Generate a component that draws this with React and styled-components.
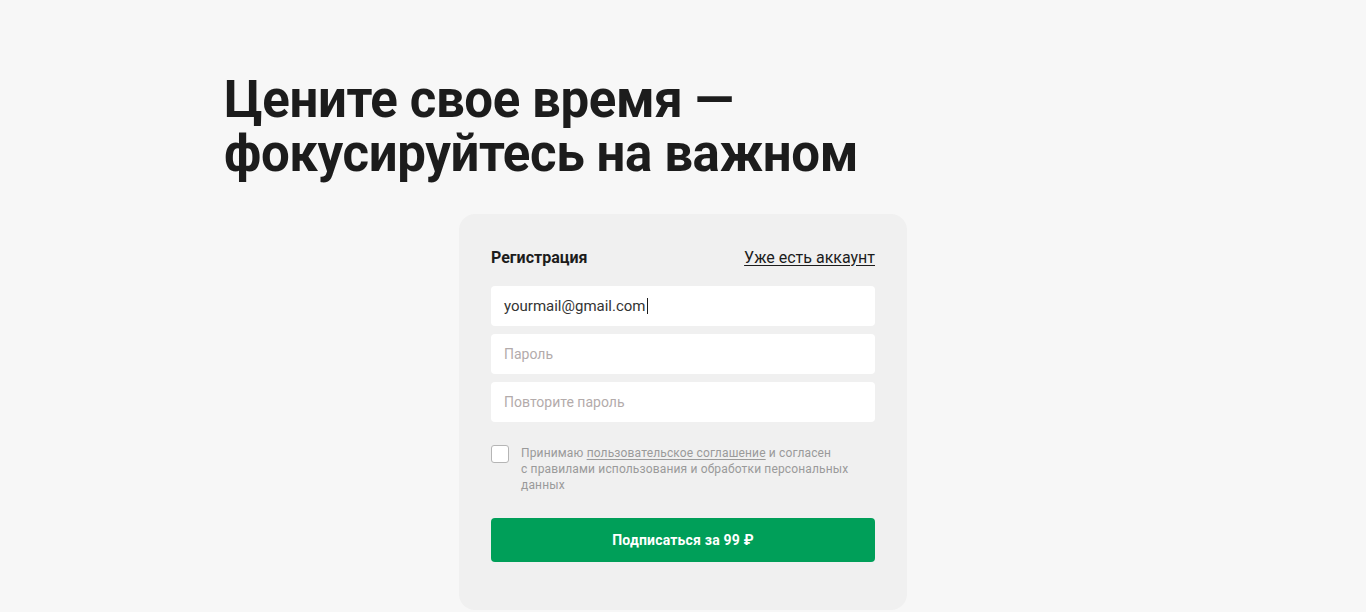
import React from "react";
import styled, { createGlobalStyle } from "styled-components";

const GlobalStyle = createGlobalStyle`
  html, body {
    margin: 0;
    padding: 0;
    background: #f7f7f7;
    font-family: Roboto, "Liberation Sans", sans-serif;
    color: #1c1c1c;
  }
  * {
    box-sizing: border-box;
  }
`;

const Page = styled.main`
  min-height: 612px;
  padding: 73px 0 0;
  display: flex;
  flex-direction: column;
  align-items: center;
`;

const Heading = styled.h1`
  width: 918px;
  margin: 0 0 33px;
  font-size: 51px;
  font-weight: 700;
  line-height: 54px;
  letter-spacing: -0.4px;
  color: #1c1c1c;
`;

const Card = styled.form`
  width: 448px;
  padding: 32px 32px 48px;
  background: #f0f0f0;
  border-radius: 16px;
  display: flex;
  flex-direction: column;
`;

const CardHeader = styled.div`
  display: flex;
  justify-content: space-between;
  align-items: center;
  height: 22px;
  margin-bottom: 18px;
`;

const CardTitle = styled.span`
  font-size: 16px;
  font-weight: 700;
  color: #1c1c1c;
`;

const LoginLink = styled.a`
  font-size: 16px;
  color: #1c1c1c;
  text-decoration: underline;
  text-underline-offset: 2px;
  cursor: pointer;
`;

const Fields = styled.div`
  display: flex;
  flex-direction: column;
  gap: 8px;
`;

const Field = styled.input`
  height: 40px;
  padding: 0 13px;
  border: none;
  border-radius: 4px;
  background: #fff;
  font-family: inherit;
  font-size: 14px;
  color: #333;
  outline: none;

  &::placeholder {
    color: #b3abab;
  }
`;

const FocusedField = styled.div`
  height: 40px;
  padding: 0 13px;
  border-radius: 4px;
  background: #fff;
  display: flex;
  align-items: center;
  font-size: 15px;
  color: #333;
`;

const Caret = styled.span`
  width: 1px;
  height: 16px;
  margin-left: 1px;
  background: #1c1c1c;
`;

const Agreement = styled.label`
  display: flex;
  gap: 12px;
  margin-top: 22px;
  cursor: pointer;
`;

const Checkbox = styled.span`
  flex: none;
  width: 18px;
  height: 18px;
  margin-top: 1px;
  border: 1px solid #b5b5b5;
  border-radius: 3px;
  background: #fff;
`;

const AgreementText = styled.span`
  padding-top: 1px;
  font-size: 12px;
  line-height: 16px;
  letter-spacing: 0.15px;
  color: #9a9a9a;
`;

const AgreementLink = styled.a`
  color: #9a9a9a;
  text-decoration: underline;
  text-underline-offset: 2px;
`;

const SubmitButton = styled.button`
  margin-top: 25px;
  height: 44px;
  border: none;
  border-radius: 4px;
  background: #009f59;
  color: #fff;
  font-family: inherit;
  font-size: 14px;
  font-weight: 700;
  letter-spacing: 0.2px;
  cursor: pointer;
`;

export default function App() {
  return (
    <>
      <GlobalStyle />
      <Page>
        <Heading>
          Цените свое время —
          <br />
          фокусируйтесь на важном
        </Heading>
        <Card onSubmit={(e) => e.preventDefault()}>
          <CardHeader>
            <CardTitle>Регистрация</CardTitle>
            <LoginLink>Уже есть аккаунт</LoginLink>
          </CardHeader>
          <Fields>
            <FocusedField>
              yourmail@gmail.com
              <Caret />
            </FocusedField>
            <Field type="password" placeholder="Пароль" />
            <Field type="password" placeholder="Повторите пароль" />
          </Fields>
          <Agreement>
            <Checkbox />
            <AgreementText>
              Принимаю <AgreementLink>пользовательское соглашение</AgreementLink> и согласен
              <br />
              с правилами использования и обработки персональных
              <br />
              данных
            </AgreementText>
          </Agreement>
          <SubmitButton type="submit">Подписаться за 99 ₽</SubmitButton>
        </Card>
      </Page>
    </>
  );
}
